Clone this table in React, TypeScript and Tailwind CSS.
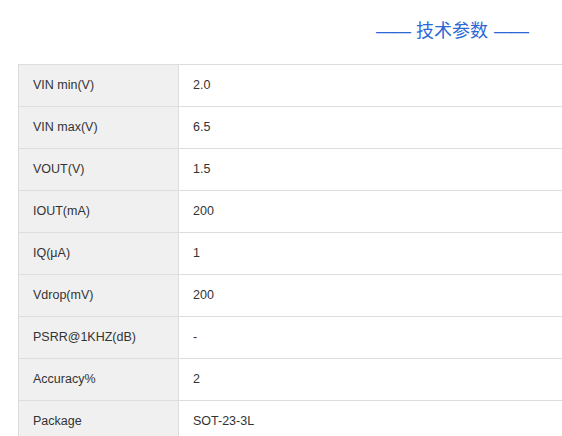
const specs: [string, string][] = [
  ['VIN min(V)', '2.0'],
  ['VIN max(V)', '6.5'],
  ['VOUT(V)', '1.5'],
  ['IOUT(mA)', '200'],
  ['IQ(μA)', '1'],
  ['Vdrop(mV)', '200'],
  ['PSRR@1KHZ(dB)', '-'],
  ['Accuracy%', '2'],
  ['Package', 'SOT-23-3L'],
]

export default function App() {
  return (
    <div
      className="h-[436px] w-[562px] overflow-hidden bg-white"
      style={{ fontFamily: '"Liberation Sans", Arial, "Noto Sans CJK SC", sans-serif' }}
    >
      <div className="ml-[18px] w-[868px]">
        {/* Section title */}
        <div className="flex h-[64px] items-center justify-center pb-[2px] text-[18px] text-[#2b68d6]">
          <span className="tracking-[-1px]">——</span>
          <span className="mx-[6px]">技术参数</span>
          <span className="tracking-[-1px]">——</span>
        </div>

        {/* Spec table */}
        <table className="w-full border-collapse text-[12.5px] text-[#333]">
          <tbody>
            {specs.map(([name, value]) => (
              <tr key={name} className="h-[42px]">
                <td className="w-[160px] border border-[#dddddd] bg-[#f0f0f0] px-[14px] pb-[1px] align-middle">
                  {name}
                </td>
                <td className="border border-[#dddddd] px-[14px] pb-[1px] align-middle">{value}</td>
              </tr>
            ))}
          </tbody>
        </table>
      </div>
    </div>
  )
}
